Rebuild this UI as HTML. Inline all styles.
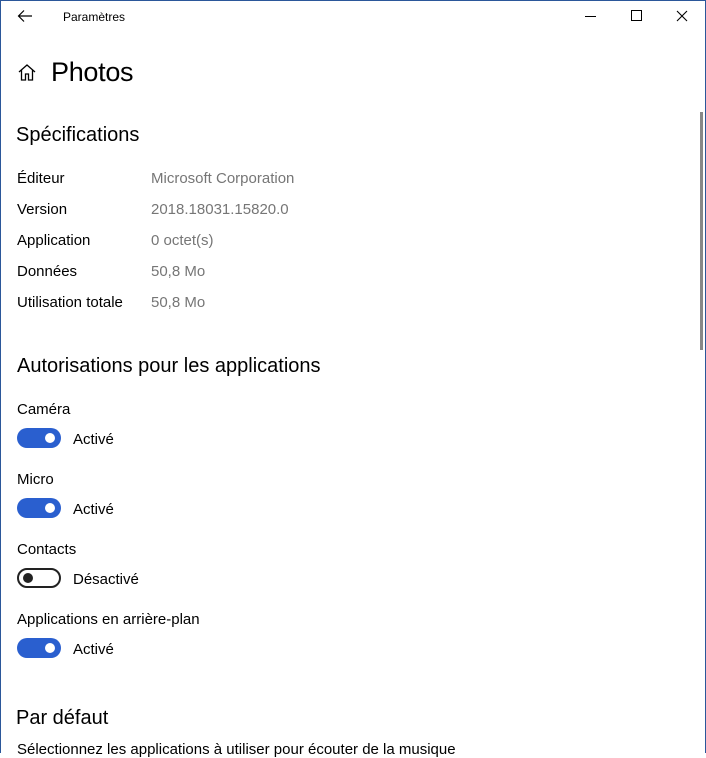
<!DOCTYPE html>
<html><head><meta charset="utf-8"><style>
body{margin:0;width:706px;height:752px;overflow:hidden;background:#fff;font-family:"Liberation Sans",sans-serif;color:#000;position:relative}
.frame{position:absolute;left:0;top:0;width:704px;height:752px;border-left:1px solid #2b579a;border-right:1px solid #2b579a;border-top:1px solid #2b579a;box-sizing:content-box}
.t{position:absolute;white-space:nowrap}
.g{color:#767676}
.tog{position:absolute;left:17px;width:44px;height:20px;border-radius:10px;background:#2a5fcf;box-sizing:border-box}
.tog::after{content:"";position:absolute;right:6px;top:5px;width:10px;height:10px;border-radius:50%;background:#fff}
.off{background:#fff;border:2px solid #222}
.off::after{left:4px;right:auto;top:3px;background:#222}
</style></head><body>
<div class="frame"></div>
<svg class="t" style="left:17px;top:9px" width="16" height="14"><path d="M15 7H2M7 1.5L1.5 7 7 12.5" stroke="#000" stroke-width="1.2" fill="none"/></svg>
<div class="t" style="left:63px;top:10px;font-size:12px">Paramètres</div>
<div class="t" style="left:585px;top:16px;width:11px;height:1px;background:#000"></div>
<div class="t" style="left:631px;top:10px;width:9px;height:9px;border:1px solid #000"></div>
<svg class="t" style="left:676px;top:10px" width="12" height="12"><path d="M1 1L11 11M11 1L1 11" stroke="#000" stroke-width="1.1"/></svg>
<svg class="t" style="left:17px;top:62px" width="20" height="20"><path d="M2 10L10 3 18 10M4.5 8v10h4v-6h3v6h4V8" stroke="#000" stroke-width="1.3" fill="none"/></svg>
<div class="t" style="left:51px;top:57px;font-size:27px;letter-spacing:-0.3px">Photos</div>
<div class="t" style="left:700px;top:112px;width:3px;height:238px;background:#888"></div>
<div class="t" style="left:16px;top:124px;font-size:20px">Spécifications</div>
<div class="t" style="left:17px;top:170px;font-size:15px">Éditeur</div><div class="t g" style="left:151px;top:170px;font-size:15px">Microsoft Corporation</div>
<div class="t" style="left:17px;top:201px;font-size:15px">Version</div><div class="t g" style="left:151px;top:201px;font-size:15px">2018.18031.15820.0</div>
<div class="t" style="left:17px;top:232px;font-size:15px">Application</div><div class="t g" style="left:151px;top:232px;font-size:15px">0 octet(s)</div>
<div class="t" style="left:17px;top:263px;font-size:15px">Données</div><div class="t g" style="left:151px;top:263px;font-size:15px">50,8 Mo</div>
<div class="t" style="left:17px;top:294px;font-size:15px">Utilisation totale</div><div class="t g" style="left:151px;top:294px;font-size:15px">50,8 Mo</div>
<div class="t" style="left:17px;top:355px;font-size:20px">Autorisations pour les applications</div>
<div class="t" style="left:17px;top:401px;font-size:15px">Caméra</div>
<div class="tog" style="top:428px"></div><div class="t" style="left:73px;top:431px;font-size:15px">Activé</div>
<div class="t" style="left:17px;top:471px;font-size:15px">Micro</div>
<div class="tog" style="top:498px"></div><div class="t" style="left:73px;top:501px;font-size:15px">Activé</div>
<div class="t" style="left:17px;top:541px;font-size:15px">Contacts</div>
<div class="tog off" style="top:568px"></div><div class="t" style="left:73px;top:571px;font-size:15px">Désactivé</div>
<div class="t" style="left:17px;top:611px;font-size:15px">Applications en arrière-plan</div>
<div class="tog" style="top:638px"></div><div class="t" style="left:73px;top:641px;font-size:15px">Activé</div>
<div class="t" style="left:16px;top:707px;font-size:20px">Par défaut</div>
<div class="t" style="left:17px;top:741px;font-size:15px">Sélectionnez les applications à utiliser pour écouter de la musique</div>
</body></html>
